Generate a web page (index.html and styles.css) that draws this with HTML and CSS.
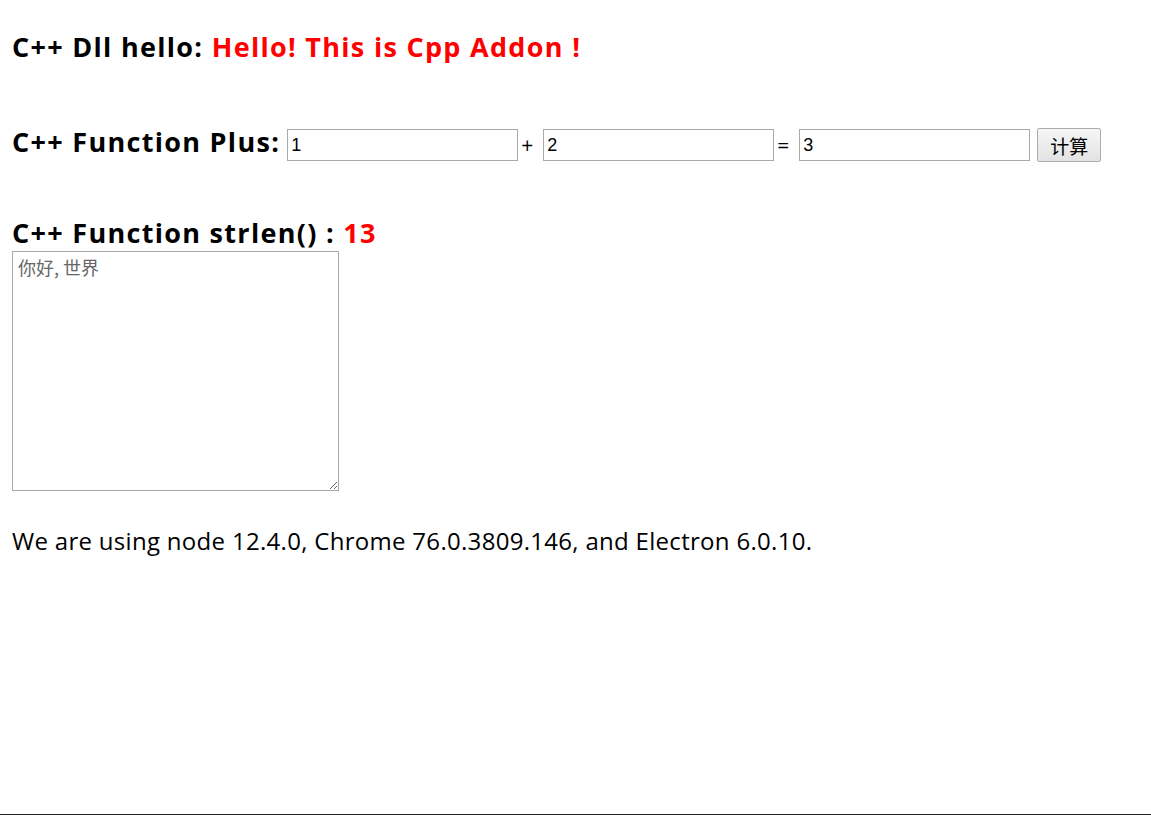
FILE: index.html
```html
<!DOCTYPE html>
<html lang="zh">
<head>
<meta charset="utf-8">
<title>Hello World!</title>
<link rel="stylesheet" href="styles.css">
</head>
<body>
<main class="page">
  <h2 class="title row-hello">C++ Dll hello: <span class="red">Hello! This is Cpp Addon !</span></h2>
  <div class="row-plus">
    <h2 class="title">C++ Function Plus:</h2>
    <input class="num" type="text" value="1">
    <span class="op">+</span>
    <input class="num" type="text" value="2">
    <span class="op">=</span>
    <input class="num" type="text" value="3">
    <button class="calc" type="button">计算</button>
  </div>
  <h2 class="title row-strlen">C++ Function strlen() : <span class="red">13</span></h2>
  <textarea class="area" placeholder="你好, 世界"></textarea>
  <p class="info">We are using node 12.4.0, Chrome 76.0.3809.146, and Electron 6.0.10.</p>
</main>
</body>
</html>
```

FILE: styles.css
```css
html {
  height: 815px;
  box-sizing: border-box;
  border-bottom: 1px solid #222;
  background: #fff;
}
body {
  margin: 0;
  font-family: "Open Sans", "Noto Sans", sans-serif;
  color: #000;
}
.page {
  padding: 31px 12px 0;
  display: flex;
  flex-direction: column;
  align-items: flex-start;
}
.title {
  margin: 0;
  font-size: 27px;
  letter-spacing: 1.3px;
  line-height: 32px;
  font-weight: 700;
  white-space: nowrap;
}
.red { color: #f00; }
.row-plus {
  margin-top: 65px;
  display: flex;
  align-items: center;
  height: 34px;
}
.row-plus .title {
  margin-right: 7px;
  margin-bottom: 6px;
}
.num {
  box-sizing: border-box;
  width: 231px;
  height: 32px;
  margin: 0;
  padding: 1px 3px 0;
  border: 1px solid #a9a9a9;
  font-family: "Liberation Sans", Arial, sans-serif;
  font-size: 18px;
  color: #000;
  background: #fff;
  outline: none;
}
.op {
  font-size: 21px;
  width: 25px;
  padding-left: 3px;
  box-sizing: border-box;
  text-align: left;
  line-height: 32px;
}
.calc {
  margin-left: 7px;
  box-sizing: border-box;
  width: 64px;
  height: 34px;
  padding: 0;
  border: 1px solid #adadad;
  border-radius: 2px;
  background: linear-gradient(#f6f6f6, #e3e3e3);
  font-family: "Noto Sans CJK SC", sans-serif;
  font-size: 19px;
  color: #000;
}
.row-strlen { margin-top: 55px; }
.area {
  margin-top: 2px;
  box-sizing: border-box;
  width: 327px;
  height: 240px;
  padding: 4px 5px;
  border: 1px solid #a9a9a9;
  font-family: "Noto Sans CJK SC", serif;
  font-size: 18px;
  line-height: 22px;
  resize: both;
}
.area::placeholder { color: #666; }
.info {
  margin: 35px 0 0;
  font-size: 24px;
  letter-spacing: 0.3px;
  line-height: 30px;
}
```
